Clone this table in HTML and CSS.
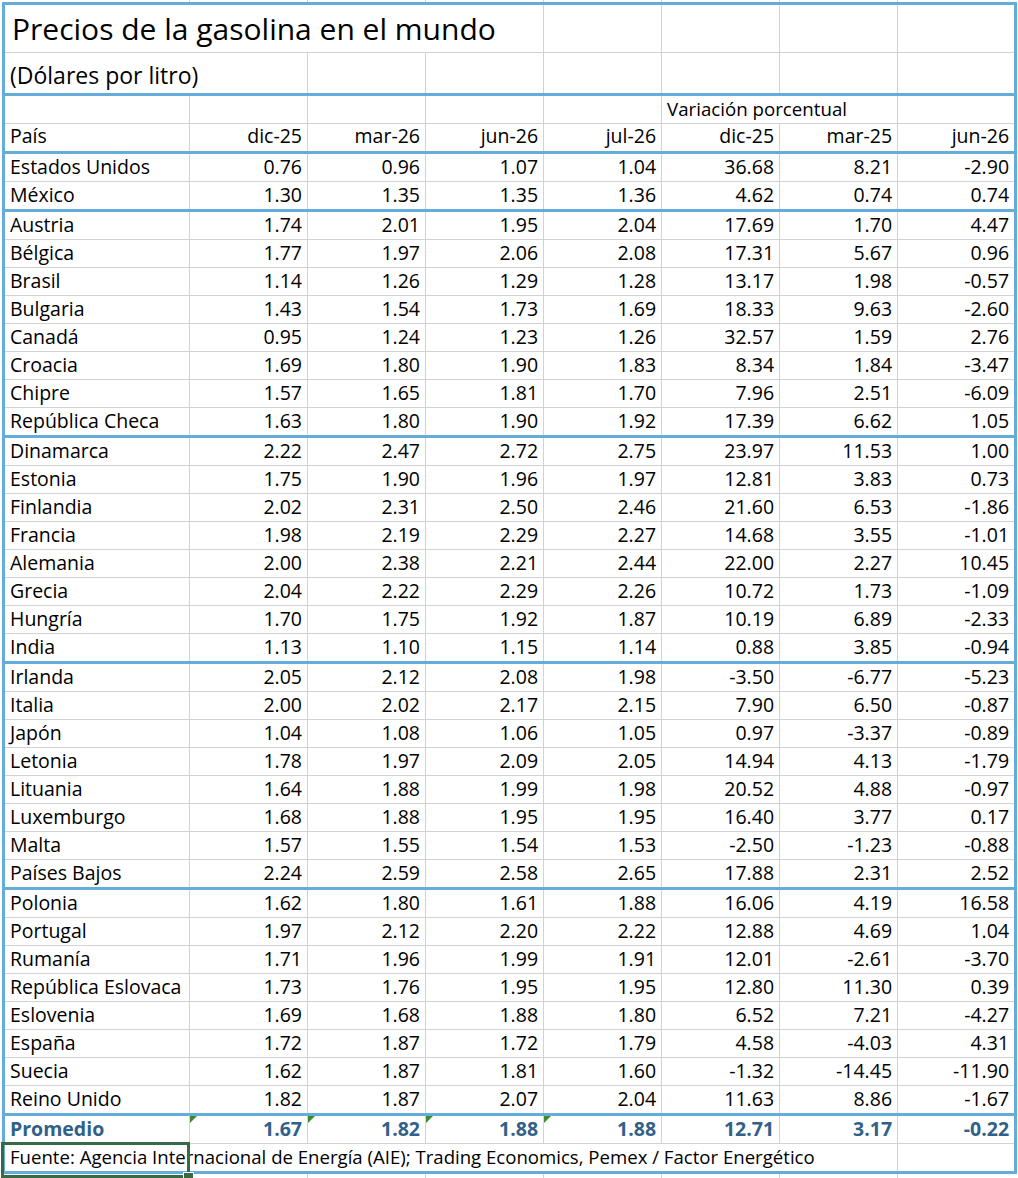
FILE: index.html
```html
<!DOCTYPE html>
<html lang="es">
<head>
<meta charset="utf-8">
<title>Precios de la gasolina en el mundo</title>
<link rel="stylesheet" href="styles.css">
</head>
<body>
<table class="sheet">
<colgroup><col class="c-name"><col class="c-num"><col class="c-num"><col class="c-num"><col class="c-num"><col class="c-num"><col class="c-num"><col class="c-num"></colgroup>
<tbody>
<tr class="r-title"><td colspan="4" class="title">Precios de la gasolina en el mundo</td><td></td><td></td><td></td><td></td></tr>
<tr class="r-sub sep"><td colspan="2" class="subtitle">(Dólares por litro)</td><td></td><td></td><td></td><td></td><td></td><td></td></tr>
<tr class="r-grp"><td></td><td></td><td></td><td></td><td></td><td colspan="2" class="grp">Variación porcentual</td><td></td></tr>
<tr class="r-head sep"><td class="name">País</td><td>dic-25</td><td>mar-26</td><td>jun-26</td><td>jul-26</td><td>dic-25</td><td>mar-25</td><td>jun-26</td></tr>
<tr><td class="name">Estados Unidos</td><td>0.76</td><td>0.96</td><td>1.07</td><td>1.04</td><td>36.68</td><td>8.21</td><td>-2.90</td></tr>
<tr class="sep"><td class="name">México</td><td>1.30</td><td>1.35</td><td>1.35</td><td>1.36</td><td>4.62</td><td>0.74</td><td>0.74</td></tr>
<tr><td class="name">Austria</td><td>1.74</td><td>2.01</td><td>1.95</td><td>2.04</td><td>17.69</td><td>1.70</td><td>4.47</td></tr>
<tr><td class="name">Bélgica</td><td>1.77</td><td>1.97</td><td>2.06</td><td>2.08</td><td>17.31</td><td>5.67</td><td>0.96</td></tr>
<tr><td class="name">Brasil</td><td>1.14</td><td>1.26</td><td>1.29</td><td>1.28</td><td>13.17</td><td>1.98</td><td>-0.57</td></tr>
<tr><td class="name">Bulgaria</td><td>1.43</td><td>1.54</td><td>1.73</td><td>1.69</td><td>18.33</td><td>9.63</td><td>-2.60</td></tr>
<tr><td class="name">Canadá</td><td>0.95</td><td>1.24</td><td>1.23</td><td>1.26</td><td>32.57</td><td>1.59</td><td>2.76</td></tr>
<tr><td class="name">Croacia</td><td>1.69</td><td>1.80</td><td>1.90</td><td>1.83</td><td>8.34</td><td>1.84</td><td>-3.47</td></tr>
<tr><td class="name">Chipre</td><td>1.57</td><td>1.65</td><td>1.81</td><td>1.70</td><td>7.96</td><td>2.51</td><td>-6.09</td></tr>
<tr class="sep"><td class="name">República Checa</td><td>1.63</td><td>1.80</td><td>1.90</td><td>1.92</td><td>17.39</td><td>6.62</td><td>1.05</td></tr>
<tr><td class="name">Dinamarca</td><td>2.22</td><td>2.47</td><td>2.72</td><td>2.75</td><td>23.97</td><td>11.53</td><td>1.00</td></tr>
<tr><td class="name">Estonia</td><td>1.75</td><td>1.90</td><td>1.96</td><td>1.97</td><td>12.81</td><td>3.83</td><td>0.73</td></tr>
<tr><td class="name">Finlandia</td><td>2.02</td><td>2.31</td><td>2.50</td><td>2.46</td><td>21.60</td><td>6.53</td><td>-1.86</td></tr>
<tr><td class="name">Francia</td><td>1.98</td><td>2.19</td><td>2.29</td><td>2.27</td><td>14.68</td><td>3.55</td><td>-1.01</td></tr>
<tr><td class="name">Alemania</td><td>2.00</td><td>2.38</td><td>2.21</td><td>2.44</td><td>22.00</td><td>2.27</td><td>10.45</td></tr>
<tr><td class="name">Grecia</td><td>2.04</td><td>2.22</td><td>2.29</td><td>2.26</td><td>10.72</td><td>1.73</td><td>-1.09</td></tr>
<tr><td class="name">Hungría</td><td>1.70</td><td>1.75</td><td>1.92</td><td>1.87</td><td>10.19</td><td>6.89</td><td>-2.33</td></tr>
<tr class="sep"><td class="name">India</td><td>1.13</td><td>1.10</td><td>1.15</td><td>1.14</td><td>0.88</td><td>3.85</td><td>-0.94</td></tr>
<tr><td class="name">Irlanda</td><td>2.05</td><td>2.12</td><td>2.08</td><td>1.98</td><td>-3.50</td><td>-6.77</td><td>-5.23</td></tr>
<tr><td class="name">Italia</td><td>2.00</td><td>2.02</td><td>2.17</td><td>2.15</td><td>7.90</td><td>6.50</td><td>-0.87</td></tr>
<tr><td class="name">Japón</td><td>1.04</td><td>1.08</td><td>1.06</td><td>1.05</td><td>0.97</td><td>-3.37</td><td>-0.89</td></tr>
<tr><td class="name">Letonia</td><td>1.78</td><td>1.97</td><td>2.09</td><td>2.05</td><td>14.94</td><td>4.13</td><td>-1.79</td></tr>
<tr><td class="name">Lituania</td><td>1.64</td><td>1.88</td><td>1.99</td><td>1.98</td><td>20.52</td><td>4.88</td><td>-0.97</td></tr>
<tr><td class="name">Luxemburgo</td><td>1.68</td><td>1.88</td><td>1.95</td><td>1.95</td><td>16.40</td><td>3.77</td><td>0.17</td></tr>
<tr><td class="name">Malta</td><td>1.57</td><td>1.55</td><td>1.54</td><td>1.53</td><td>-2.50</td><td>-1.23</td><td>-0.88</td></tr>
<tr class="sep"><td class="name">Países Bajos</td><td>2.24</td><td>2.59</td><td>2.58</td><td>2.65</td><td>17.88</td><td>2.31</td><td>2.52</td></tr>
<tr><td class="name">Polonia</td><td>1.62</td><td>1.80</td><td>1.61</td><td>1.88</td><td>16.06</td><td>4.19</td><td>16.58</td></tr>
<tr><td class="name">Portugal</td><td>1.97</td><td>2.12</td><td>2.20</td><td>2.22</td><td>12.88</td><td>4.69</td><td>1.04</td></tr>
<tr><td class="name">Rumanía</td><td>1.71</td><td>1.96</td><td>1.99</td><td>1.91</td><td>12.01</td><td>-2.61</td><td>-3.70</td></tr>
<tr><td class="name">República Eslovaca</td><td>1.73</td><td>1.76</td><td>1.95</td><td>1.95</td><td>12.80</td><td>11.30</td><td>0.39</td></tr>
<tr><td class="name">Eslovenia</td><td>1.69</td><td>1.68</td><td>1.88</td><td>1.80</td><td>6.52</td><td>7.21</td><td>-4.27</td></tr>
<tr><td class="name">España</td><td>1.72</td><td>1.87</td><td>1.72</td><td>1.79</td><td>4.58</td><td>-4.03</td><td>4.31</td></tr>
<tr><td class="name">Suecia</td><td>1.62</td><td>1.87</td><td>1.81</td><td>1.60</td><td>-1.32</td><td>-14.45</td><td>-11.90</td></tr>
<tr class="sep"><td class="name">Reino Unido</td><td>1.82</td><td>1.87</td><td>2.07</td><td>2.04</td><td>11.63</td><td>8.86</td><td>-1.67</td></tr>
<tr class="avg"><td class="name">Promedio</td><td class="flag">1.67</td><td class="flag">1.82</td><td class="flag">1.88</td><td class="flag">1.88</td><td>12.71</td><td>3.17</td><td>-0.22</td></tr>
<tr class="src"><td colspan="7" class="source"><span class="selection"><span class="handle"></span></span>Fuente: Agencia Internacional de Energía (AIE); Trading Economics, Pemex / Factor Energético</td><td></td></tr>
</tbody>
</table>
</body>
</html>
```
FILE: styles.css
```css
html, body {
  margin: 0;
  padding: 0;
  background: #ffffff;
}

body {
  min-height: 1178px;
  box-sizing: border-box;
  padding: 2px 0 0 2px;
  font-family: "Open Sans", "Liberation Sans", Arial, sans-serif;
  color: #000000;
  background-color: #ffffff;
  background-image:
    linear-gradient(#d2d2d2, #d2d2d2),
    linear-gradient(#d2d2d2, #d2d2d2),
    linear-gradient(#d2d2d2, #d2d2d2),
    linear-gradient(#d2d2d2, #d2d2d2),
    linear-gradient(#d2d2d2, #d2d2d2),
    linear-gradient(#d2d2d2, #d2d2d2),
    linear-gradient(#d2d2d2, #d2d2d2);
  background-size: 1px 100%;
  background-repeat: no-repeat;
  background-position: 189px 0, 307px 0, 425px 0, 543px 0, 661px 0, 779px 0, 897px 0;
}

.sheet {
  border-collapse: collapse;
  table-layout: fixed;
  width: 1015px;
  border: 3px solid #64acd9;
  background: #ffffff;
  font-size: 19.5px;
}

.c-name { width: 186px; }
.c-num { width: 118px; }

.sheet td {
  height: 24px;
  padding: 0 5px 3px 5px;
  border: 1px solid #d2d2d2;
  text-align: right;
  vertical-align: bottom;
  line-height: 22px;
  white-space: nowrap;
  overflow: visible;
}

.sheet td.name,
.sheet td.title,
.sheet td.subtitle,
.sheet td.grp,
.sheet td.source {
  text-align: left;
}

.sheet tr.sep > td {
  border-bottom: 3px solid #64acd9;
}

.r-title td {
  height: 42px;
  padding-bottom: 5px;
}

.sheet td.title {
  font-size: 30px;
  line-height: 36px;
  padding-left: 7px;
}

.r-sub td {
  height: 36px;
  padding-bottom: 4px;
}

.sheet td.subtitle {
  font-size: 23px;
  line-height: 28px;
}

.r-head td {
  height: 23px;
  padding-bottom: 4px;
}

.sheet td.grp {
  font-size: 18.7px;
}

.avg td {
  color: #2f6189;
  font-weight: 700;
}

.sheet td.flag {
  position: relative;
}

.sheet td.flag::before {
  content: "";
  position: absolute;
  left: 0;
  top: 0;
  border-top: 7px solid #3e8b2d;
  border-right: 7px solid transparent;
}

.sheet td.source {
  position: relative;
  font-size: 18.6px;
}

.selection {
  position: absolute;
  left: -4px;
  top: -2px;
  width: 183px;
  height: 30px;
  border: 3px solid #366c45;
  pointer-events: none;
}

.handle {
  position: absolute;
  right: -7px;
  bottom: -7px;
  width: 9px;
  height: 8px;
  background: #366c45;
  border: 1px solid #ffffff;
}
```
